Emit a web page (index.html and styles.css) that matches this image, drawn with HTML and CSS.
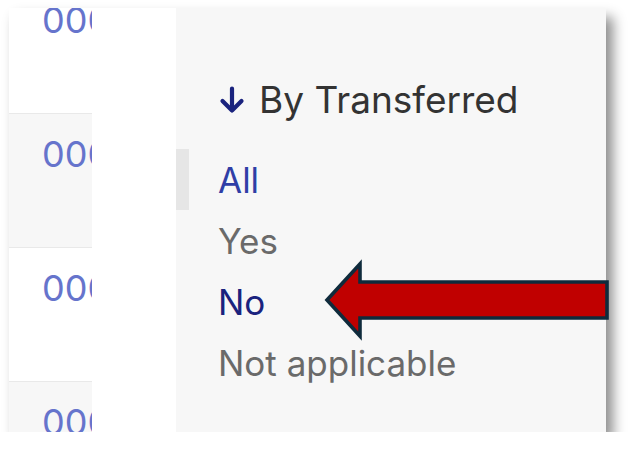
FILE: index.html
```html
<!DOCTYPE html>
<html>
<head>
<meta charset="utf-8">
<link rel="stylesheet" href="styles.css">
</head>
<body>
<div class="frame">
  <div class="table">
    <div class="row">000</div>
    <div class="row alt">000</div>
    <div class="row">000</div>
    <div class="row alt">000</div>
  </div>
  <div class="spacer"></div>
  <div class="panel">
    <div class="track"><div class="thumb"></div></div>
    <div class="filters">
      <div class="heading">
        <svg class="down" width="26" height="28" viewBox="0 0 26 28"><path d="M13 2.5 V24.5 M3.5 15 L13 24.5 L22.5 15" fill="none" stroke="#1a237e" stroke-width="4.2" stroke-linecap="round" stroke-linejoin="round"/></svg>
        <span>By Transferred</span>
      </div>
      <div class="option all">All</div>
      <div class="option">Yes</div>
      <div class="option sel">No</div>
      <div class="option">Not applicable</div>
    </div>
  </div>
  <svg class="callout" width="300" height="86" viewBox="0 0 300 86"><polygon points="7,42 40,6 40,24 287,24 287,60 40,60 40,78" fill="#c00000" stroke="#0f2b3c" stroke-width="3.6" stroke-linejoin="miter"/></svg>
</div>
</body>
</html>
```
FILE: styles.css
```css
html, body {
  margin: 0;
  padding: 0;
  background: #ffffff;
}
body {
  font-family: Inter, "Open Sans", "Liberation Sans", sans-serif;
}
.frame {
  position: relative;
  margin: 8px 0 0 9px;
  width: 597px;
  height: 424px;
  display: flex;
  overflow: visible;
  background: #ffffff;
  box-shadow: 7px 9px 12px rgba(0, 0, 0, 0.45);
}
.table {
  width: 83px;
  height: 424px;
  overflow: hidden;
  flex: none;
}
.row {
  height: 134px;
  box-sizing: border-box;
  border-top: 1px solid #e9e9e9;
  padding: 18px 0 0 33px;
  font-size: 36px;
  color: #6674cc;
  white-space: nowrap;
  background: #ffffff;
}
.row:first-child {
  margin-top: -29px;
}
.row.alt {
  background: #f7f7f7;
}
.spacer {
  width: 84px;
  flex: none;
  background: #ffffff;
}
.panel {
  flex: 1;
  display: flex;
  background: #f7f7f7;
}
.track {
  width: 13px;
  flex: none;
}
.thumb {
  margin-top: 141px;
  height: 61px;
  background: #e6e6e6;
}
.filters {
  padding: 65px 0 0 29px;
  display: flex;
  flex-direction: column;
}
.heading {
  display: flex;
  align-items: center;
  gap: 14px;
  font-size: 37px;
  color: #333333;
  height: 52px;
  margin-bottom: 29px;
}
.heading .down {
  flex: none;
  margin-left: 1px;
  margin-top: 2px;
}
.option {
  font-size: 35px;
  height: 61px;
  line-height: 52px;
  color: #6a6a6a;
}
.option.all {
  color: #2f3ea6;
}
.option.sel {
  color: #1a237e;
}
.callout {
  position: absolute;
  left: 311px;
  top: 250px;
}
```
